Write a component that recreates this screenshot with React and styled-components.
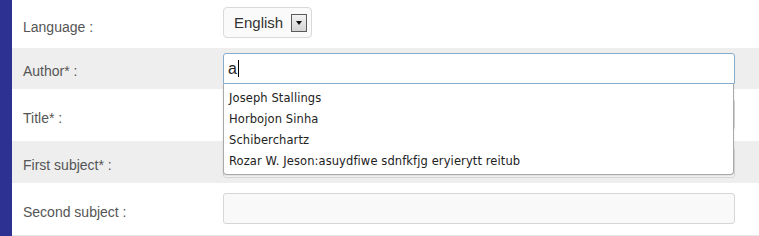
import React from "react";
import styled, { createGlobalStyle } from "styled-components";

const Global = createGlobalStyle`
	html, body {
		margin: 0;
		padding: 0;
		background: #fff;
	}
	body {
		font-family: Arial, "Liberation Sans", sans-serif;
	}
`;

const Page = styled.div`
	display: flex;
	width: 759px;
	height: 236px;
	overflow: hidden;
`;

const SideBar = styled.div`
	width: 12px;
	flex: none;
	background: #2c3192;
`;

const Form = styled.div`
	flex: 1;
	display: flex;
	flex-direction: column;
	border-bottom: 1px solid #e6e6e6;
	height: 235px;
`;

const Row = styled.div`
	display: grid;
	grid-template-columns: 200px 512px;
	padding-left: 11px;
	height: ${p => p.$h}px;
	background: ${p => (p.$alt ? "#eeeeee" : "#fff")};
	flex: none;
`;

const Label = styled.div`
	align-self: center;
	padding-top: 5px;
	font-size: 14px;
	color: #555;
`;

const Field = styled.div`
	position: relative;
	padding-top: ${p => p.$pt}px;
`;

const SelectBox = styled.div`
	display: inline-flex;
	align-items: center;
	gap: 8px;
	box-sizing: border-box;
	height: 31px;
	padding: 0 4px 0 10px;
	background: #fafafa;
	border: 1px solid #d9d9d9;
	border-radius: 4px;
	font-size: 15px;
	color: #333;
`;

const ArrowButton = styled.span`
	box-sizing: border-box;
	width: 16px;
	height: 18px;
	border: 1px solid #5a5a5a;
	background: linear-gradient(#f2f2f2, #d4d4d4);
	display: flex;
	align-items: center;
	justify-content: center;
	&::after {
		content: "";
		border-left: 3.5px solid transparent;
		border-right: 3.5px solid transparent;
		border-top: 4px solid #111;
	}
`;

const Input = styled.div`
	box-sizing: border-box;
	height: ${p => p.$height || 31}px;
	display: flex;
	align-items: center;
	padding: 0 4px;
	font-size: 16px;
	color: #222;
	background: ${p => (p.$focused ? "#fff" : "#f9f9f9")};
	border: 1px solid ${p => (p.$focused ? "#86abcd" : "#d6d6d6")};
	border-radius: ${p => (p.$focused ? "3px 3px 0 0" : "3px")};
`;

const Caret = styled.span`
	display: inline-block;
	width: 1px;
	height: 17px;
	margin-left: 1px;
	background: #000;
`;

const Suggestions = styled.ul`
	position: absolute;
	z-index: 2;
	left: 0;
	top: 36px;
	width: 511px;
	box-sizing: border-box;
	margin: 0;
	padding: 4px 0 2px;
	list-style: none;
	background: #fff;
	border: 1px solid #aaa;
	border-top: none;
	border-radius: 0 0 4px 4px;
	box-shadow: 0 1px 2px rgba(0, 0, 0, 0.12);
`;

const Suggestion = styled.li`
	height: 21px;
	line-height: 21px;
	padding-left: 5px;
	font-family: Verdana, "DejaVu Sans", sans-serif;
	font-size: 11.5px;
	letter-spacing: 0.1px;
	color: #222;
	white-space: nowrap;
`;

const authors = [
	"Joseph Stallings",
	"Horbojon Sinha",
	"Schiberchartz",
	"Rozar W. Jeson:asuydfiwe sdnfkfjg eryierytt reitub",
];

const App = () => (
	<Page>
		<Global />
		<SideBar />
		<Form>
			<Row $h={48}>
				<Label>Language :</Label>
				<Field $pt={7}>
					<SelectBox>
						English
						<ArrowButton />
					</SelectBox>
				</Field>
			</Row>
			<Row $h={41} $alt>
				<Label>Author* :</Label>
				<Field $pt={5}>
					<Input $focused $height={31}>
						a<Caret />
					</Input>
					<Suggestions>
						{authors.map(name => (
							<Suggestion key={name}>{name}</Suggestion>
						))}
					</Suggestions>
				</Field>
			</Row>
			<Row $h={52}>
				<Label>Title* :</Label>
				<Field $pt={10}>
					<Input />
				</Field>
			</Row>
			<Row $h={42} $alt>
				<Label>First subject* :</Label>
				<Field $pt={6}>
					<Input />
				</Field>
			</Row>
			<Row $h={52}>
				<Label>Second subject :</Label>
				<Field $pt={10}>
					<Input />
				</Field>
			</Row>
		</Form>
	</Page>
);

export default App;
